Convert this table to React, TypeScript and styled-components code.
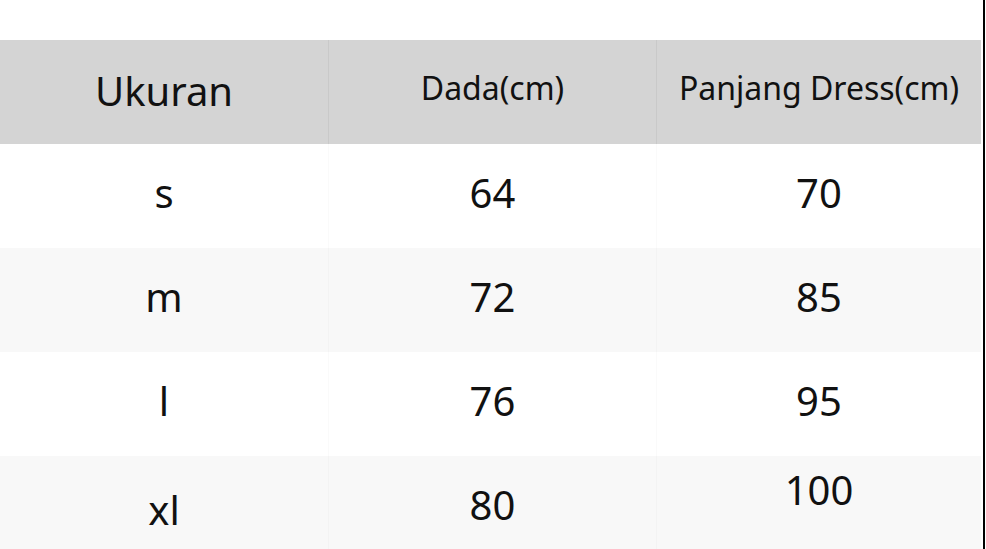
import styled, { createGlobalStyle } from 'styled-components';

type Row = {
  size: string;
  chest: string;
  length: string;
  sizeShift?: number;
  lengthShift?: number;
};

const rows: Row[] = [
  { size: 's', chest: '64', length: '70' },
  { size: 'm', chest: '72', length: '85' },
  { size: 'l', chest: '76', length: '95' },
  { size: 'xl', chest: '80', length: '100', sizeShift: 5, lengthShift: -15 },
];

const GlobalStyle = createGlobalStyle`
  html, body {
    margin: 0;
    padding: 0;
    background: #ffffff;
    overflow: hidden;
  }
  body {
    font-family: 'Noto Sans', 'Open Sans', sans-serif;
    color: #111111;
  }
`;

export default function App() {
  return (
    <>
      <GlobalStyle />
      <Page>
        <Table>
          <HeadRow>
            <HeadCell $size={40}>Ukuran</HeadCell>
            <HeadCell $size={32}>Dada(cm)</HeadCell>
            <HeadCell $size={32}>Panjang Dress(cm)</HeadCell>
          </HeadRow>
          {rows.map((r, i) => (
            <BodyRow key={r.size} $striped={i % 2 === 1}>
              <Cell $shift={r.sizeShift ?? 0}>{r.size}</Cell>
              <Cell $shift={0}>{r.chest}</Cell>
              <Cell $shift={r.lengthShift ?? 0}>{r.length}</Cell>
            </BodyRow>
          ))}
        </Table>
      </Page>
    </>
  );
}

const Page = styled.div`
  width: 985px;
  height: 549px;
  box-sizing: border-box;
  padding: 40px 2px 0 0;
  border-right: 2px solid #000000;
  overflow: hidden;
`;
const Table = styled.div`
  display: flex;
  flex-direction: column;
  width: 100%;
`;
const HeadRow = styled.div`
  display: grid;
  grid-template-columns: 328px 328px 1fr;
  height: 104px;
  background-color: #d4d4d4;
`;
const HeadCell = styled.div<{ $size: number }>`
  display: flex;
  align-items: center;
  justify-content: center;
  font-size: ${(p) => p.$size}px;
  padding-bottom: ${(p) => (p.$size > 35 ? 4 : 10)}px;
  box-sizing: border-box;
  white-space: nowrap;
  & + & {
    border-left: 1px solid #c9c9c9;
  }
`;
const BodyRow = styled.div<{ $striped: boolean }>`
  display: grid;
  grid-template-columns: 328px 328px 1fr;
  height: 104px;
  flex-shrink: 0;
  background-color: ${(p) => (p.$striped ? '#f8f8f8' : '#ffffff')};
`;
const Cell = styled.div<{ $shift: number }>`
  display: flex;
  align-items: center;
  justify-content: center;
  font-size: 40px;
  padding-top: ${(p) => (p.$shift > 0 ? p.$shift * 2 : 0)}px;
  padding-bottom: ${(p) => (p.$shift < 0 ? 7 - p.$shift * 2 : 7)}px;
  box-sizing: border-box;
  & + & {
    border-left: 1px solid rgba(0, 0, 0, 0.02);
  }
`;
